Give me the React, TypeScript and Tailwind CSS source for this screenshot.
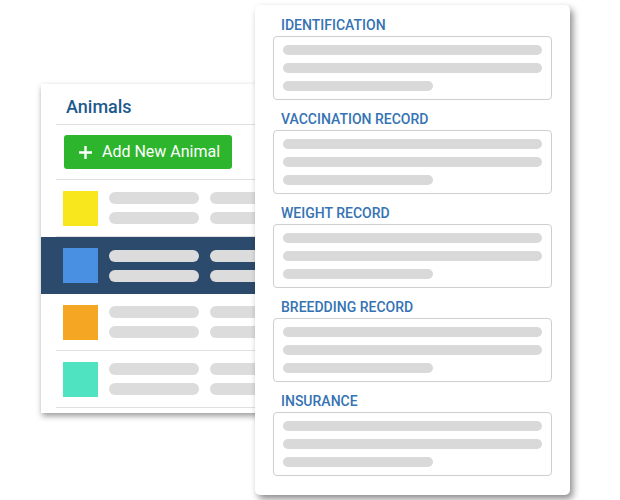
import React from 'react';

const animals = [
  { color: 'bg-[#f8e71c]', selected: false },
  { color: 'bg-[#4a90e2]', selected: true },
  { color: 'bg-[#f5a623]', selected: false },
  { color: 'bg-[#50e3c2]', selected: false },
];

const sections = ['IDENTIFICATION', 'VACCINATION RECORD', 'WEIGHT RECORD', 'BREEDDING RECORD', 'INSURANCE'];

const AnimalRow: React.FC<{ color: string; selected: boolean }> = ({ color, selected }) => (
  <div>
    <div className={`flex items-center pl-[22px] ${selected ? 'bg-[#2c4a6b] h-[57px]' : 'h-[56px]'}`}>
      <div className={`w-[35px] h-[35px] shrink-0 ${color}`} />
      <div className="flex flex-col gap-[8px] ml-[11px] shrink-0">
        <div className="flex gap-[11px]">
          <div className="w-[90px] h-[12px] rounded-full bg-[#dcdcdc]" />
          <div className="w-[90px] h-[12px] rounded-full bg-[#dcdcdc]" />
        </div>
        <div className="flex gap-[11px]">
          <div className="w-[90px] h-[12px] rounded-full bg-[#dcdcdc]" />
          <div className="w-[90px] h-[12px] rounded-full bg-[#dcdcdc]" />
        </div>
      </div>
    </div>
    {!selected && <div className="ml-[15px] h-px bg-[#e0e0e0]" />}
  </div>
);

const Section: React.FC<{ title: string; first: boolean }> = ({ title, first }) => (
  <div className={first ? '' : 'mt-[11px]'}>
    <div className="pl-[8px] text-[14px] leading-[16px] font-medium text-[#3573b3] mb-[3px]">{title}</div>
    <div className="h-[64px] border border-[#cfcfcf] rounded-[4px] px-[9px] pt-[8px] flex flex-col gap-[8px]">
      <div className="h-[10px] w-full rounded-full bg-[#d9d9d9]" />
      <div className="h-[10px] w-full rounded-full bg-[#d9d9d9]" />
      <div className="h-[10px] w-[150px] rounded-full bg-[#d9d9d9]" />
    </div>
  </div>
);

export default function App() {
  return (
    <div className="w-[620px] h-[500px] bg-white flex items-start overflow-hidden font-['Roboto',sans-serif]">
      <div className="mt-[84px] ml-[41px] w-[230px] h-[329px] bg-white shadow-[1px_3px_6px_rgba(0,0,0,0.4)] overflow-hidden">
        <div className="h-[40px] pl-[25px] flex items-end pb-[6px] text-[18px] leading-[22px] font-medium text-[#1d5a8c]">
          Animals
        </div>
        <div className="ml-[15px] h-px bg-[#e0e0e0]" />
        <div className="h-[54px] pl-[23px] flex items-center">
          <button className="h-[34px] w-[168px] rounded-[3px] bg-[#2db52d] text-white flex items-center pl-[14px] gap-[9px] text-[16px]">
            <svg width="15" height="15" viewBox="0 0 15 15">
              <path d="M7.5 1v13M1 7.5h13" stroke="white" strokeWidth="2.4" />
            </svg>
            Add New Animal
          </button>
        </div>
        <div className="ml-[15px] h-px bg-[#e0e0e0]" />
        {animals.map((a, i) => (
          <AnimalRow key={i} color={a.color} selected={a.selected} />
        ))}
      </div>
      <div className="relative z-10 mt-[5px] -ml-[16px] w-[315px] bg-white rounded-[5px] shadow-[3px_4px_7px_rgba(0,0,0,0.45)] px-[18px] pt-[12px] pb-[19px]">
        {sections.map((s, i) => (
          <Section key={s} title={s} first={i === 0} />
        ))}
      </div>
    </div>
  );
}
